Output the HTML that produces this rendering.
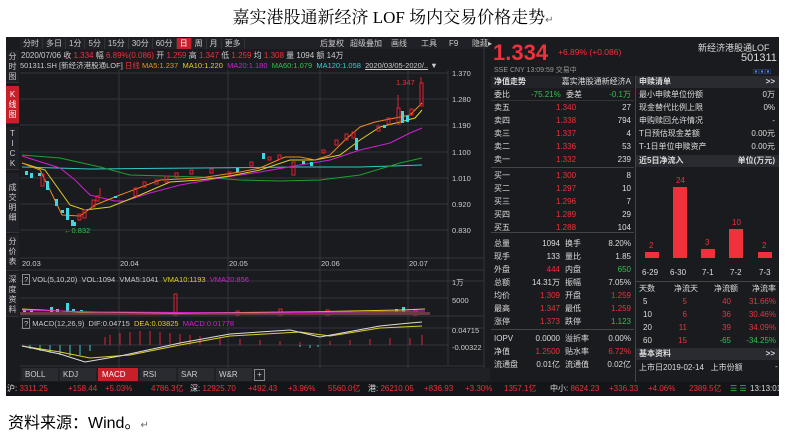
<!DOCTYPE html>
<html><head><meta charset="utf-8"><style>
*{margin:0;padding:0;box-sizing:border-box}
body{width:786px;height:438px;background:#fff;position:relative;overflow:hidden;font-family:"Liberation Sans","Noto Sans CJK SC",sans-serif}
.a{position:absolute;white-space:nowrap}
#p{position:absolute;left:6px;top:37px;width:773px;height:359px;background:#1a1b1f;overflow:hidden;font-size:8px;color:#ccc}
.r{color:#f0303a}.g{color:#2fc24a}.w{color:#ddd}.y{color:#e0d020}.m{color:#d020d0}.c{color:#30d0d0}.o{color:#f09020}
.tb span{display:inline-block;padding:0 3px;border-right:1px solid #333;line-height:11px}
.side div{position:absolute;left:0;width:13px;text-align:center;font-size:8px;line-height:10px;color:#ccc;background:#202126;border-bottom:1px solid #333}
.row{position:absolute;height:13px;line-height:13px;font-size:8px}
.hd{position:absolute;height:12px;line-height:12px;background:#2a2b30;color:#ddd;font-size:8px;font-weight:bold}
</style></head><body>
<div class="a" style="left:0;width:786px;top:3px;text-align:center;font-size:17px;font-family:'Liberation Serif','Noto Serif CJK SC',serif;color:#000">嘉实港股通新经济 LOF 场内交易价格走势<span style="font-size:10px;color:#666">↵</span></div>
<div id="p">
<div class="side">
<div style="top:13px;height:33px;padding-top:2px">分<br>时<br>图</div>
<div style="top:49px;height:38px;padding-top:4px;background:#c8202a;color:#fff">K<br>线<br>图</div>
<div style="top:90px;height:43px;padding-top:2px">T<br>I<br>C<br>K</div>
<div style="top:136px;height:60px;padding-top:10px">成<br>交<br>明<br>细</div>
<div style="top:198px;height:36px;padding-top:2px">分<br>价<br>表</div>
<div style="top:236px;height:44px;padding-top:2px">深<br>度<br>资<br>料</div>
</div>
<div class="a tb" style="left:14px;top:1px;height:11px;width:470px;background:#202126;font-size:8px">
<span>分时</span><span>多日</span><span>1分</span><span>5分</span><span>15分</span><span>30分</span><span>60分</span><span style="background:#c8202a;color:#fff">日</span><span>周</span><span>月</span><span>更多</span>
<span style="position:absolute;left:297px;border:0">后复权</span><span style="position:absolute;left:327px;border:0">超级叠加</span><span style="position:absolute;left:368px;border:0">画线</span><span style="position:absolute;left:398px;border:0">工具</span><span style="position:absolute;left:426px;border:0">F9</span><span style="position:absolute;left:449px;border:0">隐藏▸</span>
</div>
<div class="a" style="left:15px;top:13px;font-size:8px">2020/07/06 收 <span class="r">1.334</span> 幅 <span class="r">6.89%(0.086)</span> 开 <span class="r">1.259</span> 高 <span class="r">1.347</span> 低 <span class="r">1.259</span> 均 <span class="r">1.308</span> 量 1094 额 14万</div>
<div class="a" style="left:14px;top:23px;font-size:7.5px">501311.SH [新经济港股通LOF] <span class="r">日线</span> <span class="o">MA5:1.237</span> &nbsp;<span class="y">MA10:1.220</span> &nbsp;<span class="m">MA20:1.180</span> &nbsp;<span class="g">MA60:1.079</span> &nbsp;<span class="c">MA120:1.058</span> &nbsp;<u>2020/03/05-2020/..</u> ▼</div>
<svg class="a" style="left:0;top:0" width="484" height="359" viewBox="6 37 484 359">
<g stroke="#33353b" stroke-width="1" fill="none">
<line x1="20" y1="73" x2="448" y2="73"/><line x1="20" y1="99" x2="448" y2="99"/><line x1="20" y1="125" x2="448" y2="125"/><line x1="20" y1="152" x2="448" y2="152"/><line x1="20" y1="178" x2="448" y2="178"/><line x1="20" y1="204" x2="448" y2="204"/><line x1="20" y1="230" x2="448" y2="230"/>
<line x1="119" y1="70" x2="119" y2="370"/><line x1="228" y1="70" x2="228" y2="370"/><line x1="320" y1="70" x2="320" y2="370"/><line x1="408" y1="70" x2="408" y2="370"/>
<line x1="20" y1="258" x2="484" y2="258"/><line x1="20" y1="270" x2="484" y2="270"/><line x1="20" y1="281" x2="484" y2="281"/><line x1="20" y1="298" x2="448" y2="298"/><line x1="20" y1="316" x2="484" y2="316"/><line x1="20" y1="328" x2="484" y2="328"/><line x1="20" y1="345" x2="448" y2="345"/><line x1="20" y1="366" x2="484" y2="366"/>
<line x1="448" y1="70" x2="448" y2="366"/><line x1="484" y1="37" x2="484" y2="382"/>
</g>
<polyline fill="none" stroke="#30c8c8" stroke-width="1" points="22,167 90,169 200,168 300,167 360,167 422,165"/>
<polyline fill="none" stroke="#20a030" stroke-width="1" points="22,155 60,158 100,167 130,175 200,177 240,180 280,181 320,180 360,175 400,163 422,158"/>
<polyline fill="none" stroke="#d020d0" stroke-width="1" points="22,156 60,168 75,180 90,195 115,201 125,201 150,193 180,185 220,178 260,172 300,165 330,160 360,150 390,143 410,133 422,128"/>
<polyline fill="none" stroke="#e0d020" stroke-width="1" points="22,163 45,170 70,205 85,210 110,207 140,195 170,182 200,180 230,176 260,170 290,160 315,160 340,155 360,140 380,127 400,122 415,118 422,110"/>
<polyline fill="none" stroke="#f08a20" stroke-width="1" points="22,163 40,170 50,190 62,215 80,216 95,205 120,195 160,180 200,178 240,172 260,168 285,157 300,157 315,160 330,155 345,140 360,127 375,122 395,118 410,115 422,103"/>
<g stroke="#e02030" fill="none" stroke-width="1">
<rect x="41" y="174" width="3" height="12"/><rect x="78" y="214" width="3" height="6"/><rect x="83" y="210" width="3" height="8"/><rect x="92" y="200" width="3" height="7"/><rect x="96" y="196" width="3" height="5"/><rect x="134" y="188" width="3" height="8"/><rect x="143" y="182" width="3" height="5"/><rect x="155" y="180" width="3" height="4"/><rect x="165" y="176" width="3" height="6"/><rect x="175" y="173" width="3" height="4"/><rect x="190" y="170" width="3" height="4"/><rect x="210" y="169" width="3" height="4"/><rect x="228" y="172" width="3" height="3"/><rect x="250" y="162" width="3" height="4"/><rect x="268" y="157" width="3" height="3"/><rect x="278" y="155" width="3" height="4"/><rect x="292" y="162" width="3" height="13"/><rect x="322" y="150" width="3" height="3"/><rect x="335" y="140" width="3" height="5"/><rect x="345" y="134" width="3" height="6"/><rect x="352" y="132" width="3" height="6"/><rect x="377" y="126" width="3" height="5"/><rect x="387" y="118" width="3" height="6"/><rect x="397" y="108" width="3" height="16"/><rect x="410" y="109" width="3" height="6"/><rect x="420" y="83" width="3" height="23"/>
<line x1="398" y1="95" x2="398" y2="108"/><line x1="421" y1="77" x2="421" y2="83"/><line x1="100" y1="188" x2="100" y2="196"/>
</g>
<g fill="#40d8e0">
<rect x="25" y="171" width="3" height="4"/><rect x="30" y="173" width="3" height="5"/><rect x="38" y="173" width="3" height="3"/><rect x="46" y="181" width="3" height="9"/><rect x="55" y="199" width="3" height="7"/><rect x="61" y="210" width="3" height="3"/><rect x="66" y="208" width="3" height="12"/><rect x="71" y="220" width="3" height="6"/><rect x="73" y="222" width="3" height="4"/><rect x="114" y="196" width="3" height="2"/><rect x="236" y="168" width="3" height="4"/><rect x="262" y="153" width="3" height="6"/><rect x="302" y="161" width="3" height="3"/><rect x="310" y="162" width="3" height="4"/><rect x="355" y="138" width="3" height="12"/><rect x="383" y="125" width="3" height="3"/><rect x="401" y="111" width="3" height="12"/><rect x="406" y="116" width="3" height="6"/>
</g>
<text x="64" y="233" fill="#2fc24a" font-size="7.5" font-family="Liberation Sans">←0.832</text>
<text x="396" y="85" fill="#f0303a" font-size="7.5" font-family="Liberation Sans">1.347</text>
<g fill="#ccc" font-size="7.5" font-family="Liberation Sans">
<text x="452" y="76">1.370</text><text x="452" y="102">1.280</text><text x="452" y="128">1.190</text><text x="452" y="155">1.100</text><text x="452" y="181">1.010</text><text x="452" y="207">0.920</text><text x="452" y="233">0.830</text>
<text x="22" y="266">20.03</text><text x="120" y="266">20.04</text><text x="229" y="266">20.05</text><text x="321" y="266">20.06</text><text x="409" y="266">20.07</text>
<text x="452" y="285">1万</text><text x="452" y="303">5000</text><text x="452" y="333">0.04715</text><text x="452" y="350">-0.00322</text>
</g>
<g fill="#40d8e0"><rect x="23" y="309" width="3" height="6"/><rect x="30" y="310" width="3" height="5"/><rect x="50" y="307" width="3" height="8"/><rect x="56" y="309" width="3" height="6"/><rect x="66" y="303" width="3" height="12"/><rect x="72" y="309" width="3" height="6"/><rect x="80" y="310" width="3" height="5"/><rect x="395" y="309" width="3" height="6"/><rect x="402" y="307" width="3" height="8"/></g>
<g stroke="#e02030" fill="none"><rect x="174" y="294" width="3" height="21"/><rect x="236" y="311" width="3" height="4"/><rect x="279" y="309" width="3" height="6"/><rect x="326" y="310" width="3" height="5"/><rect x="414" y="310" width="3" height="5"/></g>
<rect x="20" y="312" width="410" height="3" fill="#6a3a40"/>
<polyline fill="none" stroke="#e0d020" points="22,309 80,312 175,313 300,312 400,310 425,309"/>
<polyline fill="none" stroke="#d020d0" points="22,310 100,312 250,313 425,311"/>
<g stroke="#e02030"><path d="M105 345v-8M110 345v-10M120 345v-12M130 345v-13M140 345v-14M150 345v-14M160 345v-13M170 345v-12M180 345v-11M190 345v-10M200 345v-9M220 345v-7M240 345v-6M260 345v-5M280 345v-4M300 345v-3M330 345v-4M350 345v-5M370 345v-6M390 345v-7M410 345v-7M422 345v-10"/></g>
<g stroke="#40c8c8"><path d="M30 345v4M40 345v6M50 345v8M60 345v10M70 345v11M80 345v10M90 345v6M300 345v2M310 345v3M318 345v2"/></g>
<polyline fill="none" stroke="#e0d020" points="22,346 60,352 90,358 130,355 180,345 230,336 300,332 330,336 380,328 422,326"/>
<polyline fill="none" stroke="#ddd" points="22,346 60,354 85,362 120,356 180,343 230,334 290,330 320,337 380,326 410,323 422,322"/>
</svg>
<div class="a" style="left:16px;top:238px;font-size:7.5px"><span style="border:1px solid #888;padding:0 1px">?</span> VOL(5,10,20) &nbsp;VOL:1094 &nbsp;VMA5:1041 &nbsp;<span class="y">VMA10:1193</span> &nbsp;<span class="m">VMA20:856</span></div>
<div class="a" style="left:16px;top:282px;font-size:7.5px"><span style="border:1px solid #888;padding:0 1px">?</span> MACD(12,26,9) &nbsp;DIF:0.04715 &nbsp;<span class="y">DEA:0.03825</span> &nbsp;<span class="m">MACD:0.01778</span></div>
<div class="a" style="left:14px;top:331px;width:470px;height:13px;background:#202126;font-size:8px;line-height:13px">
<span class="a" style="left:2px;width:36px;padding-left:3px;background:#2a2b30">BOLL</span><span class="a" style="left:40px;width:36px;padding-left:3px;background:#2a2b30">KDJ</span><span class="a" style="left:78px;width:40px;padding-left:4px;background:#c8202a;color:#fff">MACD</span><span class="a" style="left:120px;width:36px;padding-left:3px;background:#2a2b30">RSI</span><span class="a" style="left:158px;width:36px;padding-left:3px;background:#2a2b30">SAR</span><span class="a" style="left:196px;width:36px;padding-left:3px;background:#2a2b30">W&amp;R</span><span class="a" style="left:234px;width:11px;text-align:center;border:1px solid #888;line-height:10px;top:1px">+</span>
</div>
<!-- right panel -->
<div class="a r" style="left:487px;top:3px;font-size:22px;font-weight:bold">1.334</div>
<div class="a r" style="left:552px;top:10px;font-size:8.5px">+6.89% (+0.086)</div>
<div class="a w" style="left:692px;top:4px;font-size:9px">新经济港股通LOF</div>
<div class="a w" style="left:735px;top:15px;font-size:11px">501311</div>
<div class="a" style="left:488px;top:28px;font-size:7px;color:#999">SSE CNY 13:09:59 交易中</div>
<div class="a" style="left:747px;top:30px;width:28px;height:7px;font-size:6px;color:#48f">▣▣▣</div>
<div class="hd" style="left:485px;top:39px;width:143px;background:#222328;padding-left:3px">净值走势<span style="position:absolute;right:3px;font-weight:normal">嘉实港股通新经济A</span></div>
<div class="hd" style="left:630px;top:39px;width:143px;padding-left:3px">申赎清单<span style="position:absolute;right:4px">&gt;&gt;</span></div>
<div id="L"></div>
<div class="a" style="left:629px;top:39px;width:1px;height:306px;background:#444"></div>
<div class="a" style="left:485px;top:130px;width:143px;height:1px;background:#444"></div>
<div class="a" style="left:485px;top:195px;width:143px;height:1px;background:#444"></div>
<div class="a" style="left:485px;top:292px;width:143px;height:1px;background:#444"></div>
<div class="a" style="left:485px;top:63px;width:143px;height:1px;background:#333"></div>
<div class="hd" style="left:630px;top:118px;width:143px;padding-left:3px">近5日净流入<span style="position:absolute;right:4px">单位(万元)</span></div>
<div class="a" style="left:630px;top:244px;width:143px;height:1px;background:#444"></div>
<div class="hd" style="left:630px;top:311px;width:143px;padding-left:3px">基本资料<span style="position:absolute;right:4px">&gt;&gt;</span></div>
<div class="a" style="left:633px;top:325px;font-size:8px;color:#ddd">上市日2019-02-14 &nbsp;&nbsp;上市份额<span style="position:absolute;left:136px">-</span></div>
<!-- bars -->
<div class="a" style="left:639px;top:215px;width:14px;height:6px;background:#f0303a"></div>
<div class="a" style="left:667px;top:150px;width:14px;height:71px;background:#f0303a"></div>
<div class="a" style="left:695px;top:212px;width:14px;height:9px;background:#f0303a"></div>
<div class="a" style="left:723px;top:192px;width:14px;height:29px;background:#f0303a"></div>
<div class="a" style="left:752px;top:215px;width:14px;height:6px;background:#f0303a"></div>
<div class="a r" style="left:643px;top:204px;font-size:8px">2</div><div class="a r" style="left:670px;top:139px;font-size:8px">24</div><div class="a r" style="left:699px;top:201px;font-size:8px">3</div><div class="a r" style="left:726px;top:181px;font-size:8px">10</div><div class="a r" style="left:756px;top:204px;font-size:8px">2</div>
<div class="a w" style="left:636px;top:231px;font-size:8px">6-29</div><div class="a w" style="left:664px;top:231px;font-size:8px">6-30</div><div class="a w" style="left:696px;top:231px;font-size:8px">7-1</div><div class="a w" style="left:724px;top:231px;font-size:8px">7-2</div><div class="a w" style="left:753px;top:231px;font-size:8px">7-3</div>
<!-- bottom bar -->
<div class="a" style="left:0;top:345px;width:773px;height:14px;background:#141518;font-size:8px;line-height:14px;color:#ddd">
<span class="a" style="left:1px">沪: <span class="r">3311.25</span></span><span class="a r" style="left:62px">+158.44</span><span class="a r" style="left:99px">+5.03%</span><span class="a r" style="left:145px">4786.3亿</span><span class="a" style="left:184px">深: <span class="r">12925.70</span></span><span class="a r" style="left:242px">+492.43</span><span class="a r" style="left:282px">+3.96%</span><span class="a r" style="left:322px">5560.0亿</span><span class="a" style="left:362px">港: <span class="r">26210.05</span></span><span class="a r" style="left:418px">+836.93</span><span class="a r" style="left:459px">+3.30%</span><span class="a r" style="left:498px">1357.1亿</span><span class="a" style="left:544px">中小: <span class="r">8624.23</span></span><span class="a r" style="left:603px">+336.33</span><span class="a r" style="left:642px">+4.06%</span><span class="a r" style="left:683px">2389.5亿</span><span class="a g" style="left:724px">☰ ☰</span><span class="a" style="left:744px">13:13:01</span>
</div>
</div>
<div class="a" style="left:8px;top:409px;font-size:16px;color:#000;font-family:'Liberation Sans','Noto Sans CJK SC',sans-serif">资料来源：Wind。<span style="font-size:10px;color:#666">↵</span></div>
<script>
var L=document.getElementById('L'),h='';
function row(x,y,a,b,bc,c,cc,d,dc,w){h+='<div class="row" style="left:'+x+'px;top:'+y+'px;width:'+w+'px"><span class="a w" style="left:3px">'+a+'</span>'+(b?'<span class="a '+bc+'" style="right:'+(d!==undefined?74:3)+'px">'+b+'</span>':'')+(c?'<span class="a w" style="left:74px">'+c+'</span>':'')+(d!==undefined?'<span class="a '+dc+'" style="right:3px">'+d+'</span>':'')+'</div>';}
h+='<div class="row" style="left:485px;top:51px;width:143px"><span class="a w" style="left:3px">委比</span><span class="a g" style="left:40px">-75.21%</span><span class="a w" style="left:75px">委差</span><span class="a g" style="right:3px">-0.1万</span></div>';
var s=[['卖五','1.340','27'],['卖四','1.338','794'],['卖三','1.337','4'],['卖二','1.336','53'],['卖一','1.332','239']];
s.forEach(function(r,i){h+='<div class="row" style="left:485px;top:'+(64+i*13)+'px;width:143px"><span class="a w" style="left:3px">'+r[0]+'</span><span class="a r" style="left:65px">'+r[1]+'</span><span class="a w" style="right:3px">'+r[2]+'</span></div>';});
var b=[['买一','1.300','8'],['买二','1.297','10'],['买三','1.296','7'],['买四','1.289','29'],['买五','1.288','104']];
b.forEach(function(r,i){h+='<div class="row" style="left:485px;top:'+(132+i*13)+'px;width:143px"><span class="a w" style="left:3px">'+r[0]+'</span><span class="a r" style="left:65px">'+r[1]+'</span><span class="a w" style="right:3px">'+r[2]+'</span></div>';});
var t=[['总量','1094','w','换手','8.20%','w'],['现手','133','w','量比','1.85','w'],['外盘','444','r','内盘','650','g'],['总额','14.31万','w','振幅','7.05%','w'],['均价','1.309','r','开盘','1.259','r'],['最高','1.347','r','最低','1.259','r'],['涨停','1.373','r','跌停','1.123','g']];
t.forEach(function(r,i){row(485,200+i*13,r[0],r[1],r[2],r[3],'',r[4],r[5],143);});
var u=[['IOPV','0.0000','w','溢折率','0.00%','w'],['净值','1.2500','r','贴水率','6.72%','r'],['流通盘','0.01亿','w','流通值','0.02亿','w']];
u.forEach(function(r,i){row(485,295+i*13,r[0],r[1],r[2],r[3],'',r[4],r[5],143);});
var q=[['最小申赎单位份额','0万'],['现金替代比例上限','0%'],['申购赎回允许情况','-'],['T日预估现金差额','0.00元'],['T-1日单位申赎资产','0.00元']];
q.forEach(function(r,i){h+='<div class="row" style="left:630px;top:'+(51+i*13)+'px;width:143px"><span class="a w" style="left:3px">'+r[0]+'</span><span class="a w" style="right:4px">'+r[1]+'</span></div>';});
h+='<div class="row" style="left:630px;top:245px;width:143px"><span class="a w" style="left:3px">天数</span><span class="a w" style="left:38px">净流天</span><span class="a w" style="left:78px">净流额</span><span class="a w" style="right:3px">净流率</span></div>';
var z=[['5','5','40','r','31.66%','r'],['10','6','36','r','30.46%','r'],['20','11','39','r','34.09%','r'],['60','15','-65','g','-34.25%','g']];
z.forEach(function(r,i){h+='<div class="row" style="left:630px;top:'+(258+i*13)+'px;width:143px"><span class="a w" style="left:7px">'+r[0]+'</span><span class="a r" style="right:92px">'+r[1]+'</span><span class="a '+r[3]+'" style="right:48px">'+r[2]+'</span><span class="a '+r[5]+'" style="right:3px">'+r[4]+'</span></div>';});
L.outerHTML=h;
</script>
</body></html>
